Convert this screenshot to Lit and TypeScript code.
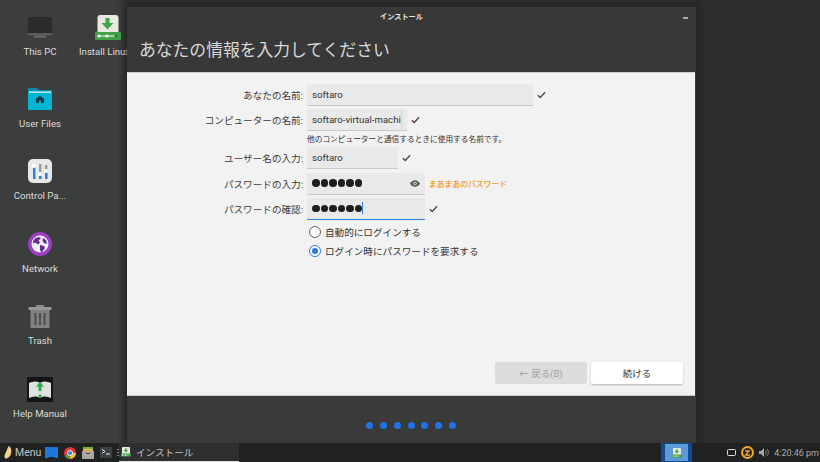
import { LitElement, html, css, svg } from "lit";
import { customElement } from "lit/decorators.js";

const check = html`<svg class="check" width="9" height="8" viewBox="0 0 10 8"><path d="M1 4.200 3.600 6.800 9 1" fill="none" stroke="#4a4a4a" stroke-width="1.500"/></svg>`;

const installIcon = (s: number) => html`<svg width=${s} height=${s} viewBox="0 0 26 26">
  <rect x="2.500" y="0" width="21" height="20" rx="2.500" fill="#e9e9e4"/>
  <path d="M10.500 3h4v5h4l-6 6.500-6-6.500h4z" fill="#3fa648"/>
  <rect x="0" y="17" width="26" height="8" rx="1" fill="#43a047"/>
  <path d="M3 21h18" stroke="#fff" stroke-width="1"/>
  <circle cx="4" cy="21" r="1.600" fill="#fff"/><circle cx="12" cy="21" r="1.600" fill="#fff"/><circle cx="21" cy="21" r="1.600" fill="#2e7d32"/>
</svg>`;

const desktopIcons = [
  {
    label: "This PC", y: 15,
    icon: svg`<rect x="3" y="2" width="24" height="16" fill="#2b2b2b"/><rect x="3" y="18" width="24" height="2.500" fill="#5a5a5a"/><rect x="9" y="20.500" width="12" height="2" fill="#6e6e6e"/>`,
  },
  {
    label: "User Files", y: 87,
    icon: svg`<path d="M3 1h9l2 2h13v20H3z" fill="#0a8aa6"/><rect x="3" y="4" width="24" height="19" fill="#00b4d2"/><rect x="4" y="4.500" width="22" height="1.400" fill="#c8f0f6"/><path d="M15 8.500 11 12v4h3v-2.500h2V16h3v-4z" fill="#123c46"/>`,
  },
  {
    label: "Control Pa...", y: 159,
    icon: svg`<rect x="3" y="0" width="24" height="24" rx="5" fill="#e8e8e6"/><rect x="8" y="6" width="2.400" height="14" fill="#2a7de1"/><rect x="14" y="5" width="2.400" height="15" fill="#9a9a9a"/><rect x="14" y="17" width="2.400" height="3" fill="#2a7de1"/><rect x="20" y="6" width="2.400" height="14" fill="#9a9a9a"/><rect x="20" y="14" width="2.400" height="6" fill="#2a7de1"/><circle cx="9" cy="7" r="2" fill="#fff"/><circle cx="15" cy="15" r="2" fill="#fff"/><circle cx="21" cy="12" r="2" fill="#fff"/>`,
  },
  {
    label: "Network", y: 232,
    icon: svg`<circle cx="15" cy="12" r="12" fill="#9c3fc2"/><circle cx="15" cy="12" r="8.500" fill="#f1f1f4"/><path d="M10 6.500c2-1.500 4-1.500 5.500-1 .5 1.500-1 2-2 3l1.500 2-2 2-3-2-2 1c-.3-2 .5-3.500 2-5zM15 13l4 1 1 2-3 4c-1.500 0-2-2-2-3zM18 6l3 2 1 4-3-1-1.500-2z" fill="#6a2a96"/>`,
  },
  {
    label: "Trash", y: 304,
    icon: svg`<rect x="3.500" y="3" width="23" height="3" rx="1" fill="#9a9a9a"/><rect x="11" y="1" width="8" height="2.500" fill="#8a8a8a"/><rect x="5.500" y="6" width="19" height="18" fill="#808080"/><path d="M10.500 9v12M15 9v12M19.500 9v12" stroke="#4e4e4e" stroke-width="2"/>`,
  },
  {
    label: "Help Manual", y: 377,
    icon: svg`<rect x="2" y="0" width="26" height="25" fill="#141414"/><path d="M4 6c4-2 8-2 11 0 3-2 7-2 11 0v15c-4-2-8-2-11 0-3-2-7-2-11 0z" fill="#dfe3df"/><path d="M15 5l4 4.500h-2.500V14h-3V9.500H11zM15 17l2 2-2 2-2-2z" fill="#2fa84a"/>`,
  },
];

const formRows = [
  { label: "あなたの名前:", value: "softaro", cls: "w-name" },
  { label: "コンピューターの名前:", value: "softaro-virtual-machine", cls: "w-host" },
];

@customElement("app-root")
export class AppRoot extends LitElement {
  static styles = css`
    :host {
      display: block;
      width: 820px;
      height: 462px;
      font-family: Roboto, "Noto Sans CJK JP", sans-serif;
    }
    .screen {
      position: relative;
      width: 820px;
      height: 462px;
      overflow: hidden;
      display: flex;
      flex-direction: column;
      background: #2b2d2c;
    }
    .desk {
      flex: 1;
      position: relative;
      background: linear-gradient(90deg, #3c3e3d 0, #3c3e3d 118px, #2b2d2c 128px);
    }
    .dicon {
      position: absolute;
      left: 10px;
      width: 60px;
      display: flex;
      flex-direction: column;
      align-items: center;
      gap: 3.500px;
      color: #dcdcdc;
      font-size: 9.600px;
      line-height: 13px;
      white-space: nowrap;
    }
    .dicon.install {
      left: 79px;
      top: 15px;
      width: 50px;
      align-items: flex-start;
    }
    .dicon.install svg {
      display: block;
      margin-left: 16px;
    }
    .window {
      position: absolute;
      left: 127px;
      top: 7px;
      width: 569px;
      height: 436px;
      display: flex;
      flex-direction: column;
      background: #3a3a3a;
      box-shadow: 0 0 6px 3px rgba(0, 0, 0, 0.18);
    }
    .titlebar {
      height: 65px;
      position: relative;
      padding-top: 4px;
      box-sizing: border-box;
      background: #383838;
      color: #e8e8e8;
    }
    .wtitle {
      font-size: 7.200px;
      line-height: 11px;
      font-weight: 700;
      text-align: center;
      padding-right: 20px;
    }
    .minimize {
      position: absolute;
      right: 8px;
      top: 10px;
      width: 5px;
      height: 2px;
      background: #aaa;
    }
    .heading {
      margin: 16px 0 0 12px;
      font-size: 16.800px;
      line-height: 25px;
      color: #d8d8d8;
    }
    .content {
      height: 324px;
      box-sizing: border-box;
      margin-right: 1px;
      padding: 11px 12px 11px 0;
      background: #f2f2f2;
      border-top: 1px solid #d0d0d0;
      border-bottom: 1px solid #c8c8c8;
      display: flex;
      flex-direction: column;
      color: #333;
    }
    .form {
      display: grid;
      grid-template-columns: 176px 1fr;
      column-gap: 4px;
      row-gap: 3.300px;
      align-items: center;
      font-size: 9.600px;
    }
    .label {
      text-align: right;
      color: #3a3a3a;
    }
    .field-wrap {
      display: flex;
      align-items: center;
      gap: 4px;
      height: 22px;
    }
    .input {
      flex: none;
      box-sizing: border-box;
      height: 22px;
      padding: 0 5px;
      display: flex;
      align-items: center;
      background: #e9e9e9;
      border-bottom: 1px solid #c9c9c9;
      font-size: 9.600px;
      color: #333;
      overflow: hidden;
      white-space: nowrap;
      position: relative;
    }
    .w-name { width: 226px; }
    .w-host { width: 100px; }
    .w-host::after {
      content: "";
      position: absolute;
      right: 0;
      top: 0;
      bottom: 0;
      width: 5px;
      background: #e9e9e9;
      border-left: 1px solid #d6d6d6;
    }
    .w-user { width: 91px; }
    .w-pass { width: 118px; }
    .focused { border-bottom: 1px solid #2f7fe0; }
    .hint {
      grid-column: 2;
      height: 9.500px;
      font-size: 7.700px;
      line-height: 9.500px;
      color: #333;
    }
    .dots {
      display: flex;
      gap: 1px;
    }
    .dots i {
      display: block;
      width: 7.500px;
      height: 7.500px;
      border-radius: 50%;
      background: #1e1e1e;
    }
    .caret {
      width: 1px;
      height: 12px;
      background: #2f7fe0;
    }
    .eye {
      position: absolute;
      right: 5px;
      top: 7px;
    }
    .strength {
      color: #f7941d;
      font-size: 7.800px;
      font-weight: 500;
    }
    .radios {
      margin: 4.500px 0 0 182px;
      display: flex;
      flex-direction: column;
      gap: 4.300px;
      font-size: 9.600px;
      color: #333;
    }
    .radio {
      display: flex;
      align-items: center;
      height: 15px;
      gap: 4px;
    }
    .radio b {
      width: 12px;
      height: 12px;
      box-sizing: border-box;
      border-radius: 50%;
      border: 1px solid #666;
      background: #f8f8f8;
      display: flex;
      align-items: center;
      justify-content: center;
    }
    .radio b.on { border-color: #2f7fe0; }
    .radio b.on::after {
      content: "";
      width: 6px;
      height: 6px;
      border-radius: 50%;
      background: #2a76dc;
    }
    .buttons {
      margin-top: auto;
      display: flex;
      justify-content: flex-end;
      gap: 4px;
    }
    .btn {
      width: 92px;
      height: 22px;
      border-radius: 2px;
      font-size: 9.500px;
      display: flex;
      align-items: center;
      justify-content: center;
    }
    .btn.off { background: #dcdcdc; color: #a0a0a0; }
    .btn.on { background: #fff; color: #333; box-shadow: 0 1px 2px rgba(0, 0, 0, 0.25); }
    .progress {
      flex: 1;
      display: flex;
      align-items: center;
      justify-content: center;
      gap: 6.800px;
      padding: 11px 1px 0 0;
      box-sizing: border-box;
    }
    .progress i {
      width: 7px;
      height: 7px;
      border-radius: 50%;
      background: #1f74e6;
    }
    .taskbar {
      height: 19px;
      flex: none;
      background: #202221;
      display: flex;
      align-items: center;
      color: #c4c4c4;
      font-size: 10.500px;
      position: relative;
    }
    .menu {
      display: flex;
      align-items: center;
      gap: 3px;
      margin-left: 4px;
      width: 41px;
    }
    .launchers {
      display: flex;
      align-items: center;
      gap: 6px;
      width: 74px;
    }
    .grip {
      width: 2px;
      height: 7px;
      margin-left: -1px;
      background: repeating-linear-gradient(#888 0 1px, transparent 1px 3px);
    }
    .task {
      width: 120px;
      height: 19px;
      box-sizing: border-box;
      padding-left: 2px;
      background: #2f2f2f;
      border-bottom: 1px solid #dcdcdc;
      display: flex;
      align-items: center;
      gap: 5px;
      font-size: 9.600px;
    }
    .pager {
      flex: none;
      margin-left: auto;
      width: 31px;
      height: 19px;
      background: #134a8f;
      display: flex;
      align-items: center;
      justify-content: center;
      margin-right: 35px;
    }
    .pager span {
      width: 23px;
      height: 17px;
      background: #5b9bd8;
      display: flex;
      align-items: center;
      justify-content: center;
    }
    .tray {
      display: flex;
      align-items: center;
      gap: 5px;
      margin-right: 1px;
      font-size: 9px;
      color: #aaa;
    }
    .tray span { white-space: nowrap; }
  `;

  private renderDots(n: number) {
    return html`<span class="dots">${Array.from({ length: n }, () => html`<i></i>`)}</span>`;
  }

  render() {
    return html`
      <div class="screen">
        <div class="desk">
          ${desktopIcons.map(
            (d) => html`
              <div class="dicon" style="top:${d.y}px">
                <svg width="30" height="26" viewBox="0 0 30 26">${d.icon}</svg>
                <span>${d.label}</span>
              </div>
            `
          )}
          <div class="dicon install">
            ${installIcon(26)}
            <span>Install Linux</span>
          </div>

          <div class="window">
            <div class="titlebar">
              <div class="wtitle">インストール</div>
              <div class="minimize"></div>
              <div class="heading">あなたの情報を入力してください</div>
            </div>
            <div class="content">
              <div class="form">
                ${formRows.map(
                  (r) => html`
                    <div class="label">${r.label}</div>
                    <div class="field-wrap">
                      <div class="input ${r.cls}">${r.value}</div>
                      ${check}
                    </div>
                  `
                )}
                <div class="hint">他のコンピューターと通信するときに使用する名前です。</div>
                <div class="label">ユーザー名の入力:</div>
                <div class="field-wrap">
                  <div class="input w-user">softaro</div>
                  ${check}
                </div>
                <div class="label">パスワードの入力:</div>
                <div class="field-wrap">
                  <div class="input w-pass">
                    ${this.renderDots(6)}
                    <svg class="eye" width="10" height="7" viewBox="0 0 12 8">
                      <path d="M0 4c1.500-2.500 3.500-4 6-4s4.500 1.500 6 4c-1.500 2.500-3.500 4-6 4S1.500 6.500 0 4z" fill="#5a5a5a"/>
                      <circle cx="6" cy="4" r="2" fill="#e9e9e9"/>
                      <circle cx="6" cy="4" r="1.100" fill="#5a5a5a"/>
                    </svg>
                  </div>
                  <span class="strength">まあまあのパスワード</span>
                </div>
                <div class="label">パスワードの確認:</div>
                <div class="field-wrap">
                  <div class="input w-pass focused">
                    ${this.renderDots(6)}<span class="caret"></span>
                  </div>
                  ${check}
                </div>
              </div>
              <div class="radios">
                <div class="radio"><b></b>自動的にログインする</div>
                <div class="radio"><b class="on"></b>ログイン時にパスワードを要求する</div>
              </div>
              <div class="buttons">
                <div class="btn off">← 戻る(B)</div>
                <div class="btn on">続ける</div>
              </div>
            </div>
            <div class="progress">
              ${Array.from({ length: 7 }, () => html`<i></i>`)}
            </div>
          </div>
        </div>

        <div class="taskbar">
          <div class="menu">
            <svg width="8" height="13" viewBox="0 0 8 13"><path d="M5 0c2.500 1.500 3 6 1.500 9S2 13.500 1 12s-.5-3 1-6S3.500 1 5 0z" fill="#f3d48a"/></svg>
            <span>Menu</span>
          </div>
          <div class="launchers">
            <svg width="13" height="11" viewBox="0 0 13 11"><path d="M0 0h13v11h-3l-1-1H4l-1 1H0z" fill="#1e78d8"/></svg>
            <svg width="12" height="12" viewBox="0 0 12 12">
              <circle cx="6" cy="6" r="6" fill="#e53935"/>
              <path d="M6 6 .8 9A6 6 0 0 0 6.500 12z" fill="#43a047"/>
              <path d="M6 6h6A6 6 0 0 1 6.500 12z" fill="#fbc02d"/>
              <circle cx="6" cy="6" r="2.800" fill="#fff"/>
              <circle cx="6" cy="6" r="2.100" fill="#1e88e5"/>
            </svg>
            <svg width="12" height="12" viewBox="0 0 12 12">
              <rect x="1" y="0" width="10" height="3" fill="#7cb342"/>
              <rect x="1" y="2" width="10" height="3" fill="#e0b34a"/>
              <rect x="0" y="4" width="12" height="8" fill="#a8a8a0"/>
              <rect x="4" y="6" width="4" height="1" fill="#444"/>
            </svg>
            <svg width="12" height="11" viewBox="0 0 12 11">
              <rect width="12" height="11" fill="#3c4043"/>
              <path d="M2 2.500 5 4.500 2 6.500" fill="none" stroke="#eee"/>
              <path d="M6 7h4" stroke="#eee"/>
            </svg>
            <span class="grip"></span>
          </div>
          <div class="task">
            ${installIcon(10)}
            <span>インストール</span>
          </div>
          <div class="pager"><span>${installIcon(10)}</span></div>
          <div class="tray">
            <svg width="9" height="8" viewBox="0 0 9 8"><rect x=".5" y=".5" width="8" height="6" rx="1" fill="none" stroke="#ddd"/></svg>
            <svg width="13" height="13" viewBox="0 0 13 13">
              <circle cx="6.500" cy="6.500" r="5.500" fill="none" stroke="#f5a623" stroke-width="2"/>
              <path d="M4 5h4L4.500 9H9" fill="none" stroke="#f5a623" stroke-width="1.300"/>
            </svg>
            <svg width="10" height="9" viewBox="0 0 10 9">
              <path d="M0 3h2l3-3v9L2 6H0z" fill="#aaa"/>
              <path d="M6.500 2.500a3 3 0 0 1 0 4M8 1a5 5 0 0 1 0 7" fill="none" stroke="#888"/>
            </svg>
            <span>4:20:46 pm</span>
          </div>
        </div>
      </div>
    `;
  }
}
